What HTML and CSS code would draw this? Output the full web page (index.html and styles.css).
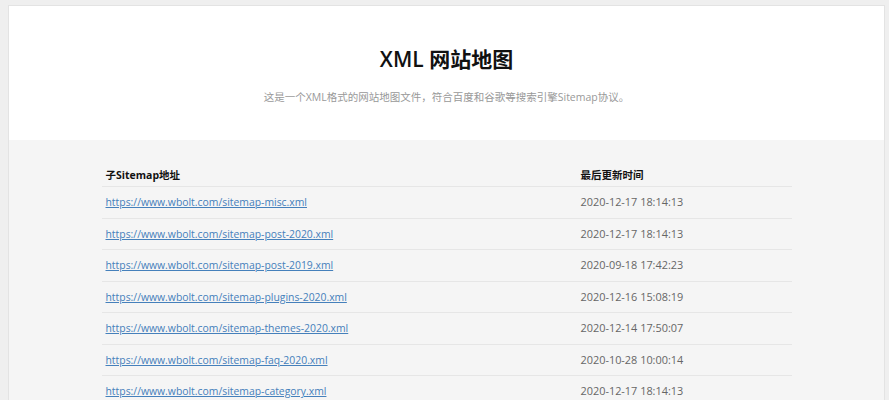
FILE: index.html
```html
<!DOCTYPE html>
<html lang="zh">
<head>
<meta charset="utf-8">
<title>XML 网站地图</title>
<link rel="stylesheet" href="styles.css">
</head>
<body>
<div class="page">
  <header class="hero">
    <h1 class="title">XML 网站地图</h1>
    <p class="desc">这是一个XML格式的网站地图文件，符合百度和谷歌等搜索引擎Sitemap协议。</p>
  </header>
  <main class="content">
    <table class="sitemap">
      <thead>
        <tr><th class="c-url">子Sitemap地址</th><th class="c-date">最后更新时间</th></tr>
      </thead>
      <tbody>
        <tr><td><a href="#">https://www.wbolt.com/sitemap-misc.xml</a></td><td>2020-12-17 18:14:13</td></tr>
        <tr><td><a href="#">https://www.wbolt.com/sitemap-post-2020.xml</a></td><td>2020-12-17 18:14:13</td></tr>
        <tr><td><a href="#">https://www.wbolt.com/sitemap-post-2019.xml</a></td><td>2020-09-18 17:42:23</td></tr>
        <tr><td><a href="#">https://www.wbolt.com/sitemap-plugins-2020.xml</a></td><td>2020-12-16 15:08:19</td></tr>
        <tr><td><a href="#">https://www.wbolt.com/sitemap-themes-2020.xml</a></td><td>2020-12-14 17:50:07</td></tr>
        <tr><td><a href="#">https://www.wbolt.com/sitemap-faq-2020.xml</a></td><td>2020-10-28 10:00:14</td></tr>
        <tr><td><a href="#">https://www.wbolt.com/sitemap-category.xml</a></td><td>2020-12-17 18:14:13</td></tr>
      </tbody>
    </table>
  </main>
</div>
</body>
</html>
```
FILE: styles.css
```css
html, body {
  margin: 0;
  padding: 0;
  background: #efefef;
  font-family: "Open Sans", "Noto Sans CJK SC", sans-serif;
}
.page {
  margin: 5px 4px 0 8px;
  border: 1px solid #e3e3e3;
  border-bottom: 0;
  background: #f5f5f5;
  min-height: 400px;
}
.hero {
  background: #fff;
  height: 134px;
  text-align: center;
  box-sizing: border-box;
  padding-top: 40px;
}
.title {
  margin: 0;
  font-size: 21px;
  line-height: 26px;
  font-weight: 600;
  color: #111;
}
.desc {
  margin: 17px 0 0;
  font-size: 10.5px;
  line-height: 16px;
  color: #999;
}
.content {
  padding-top: 24px;
}
.sitemap {
  width: 690px;
  margin: 0 auto;
  border-collapse: collapse;
  font-size: 10.5px;
}
.sitemap th {
  text-align: left;
  font-weight: 700;
  color: #111;
  height: 20px;
  padding: 0 4px 2px;
  vertical-align: middle;
  border-bottom: 1px solid #e6e6e6;
}
.sitemap td {
  height: 29.5px;
  padding: 0 4px 1px;
  border-bottom: 1px solid #e6e6e6;
  color: #666;
  vertical-align: middle;
  font-size: 10.9px;
}
.c-url { width: 467px; }
.sitemap a {
  color: #4580bb;
  font-size: 10.4px;
  text-decoration: underline;
}
```
